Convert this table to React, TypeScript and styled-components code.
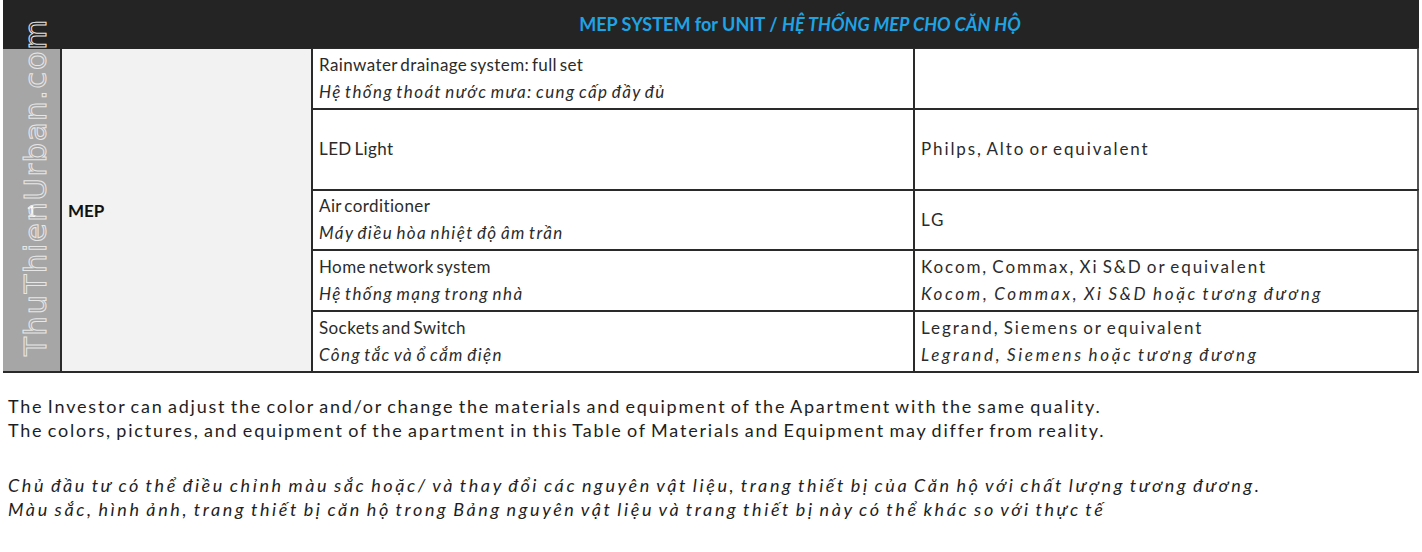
import styled, { createGlobalStyle } from "styled-components";

const GlobalStyle = createGlobalStyle`
    html, body {
        margin: 0;
        padding: 0;
        background: #ffffff;
    }
    body {
        font-family: Lato, "Open Sans", sans-serif;
        color: #262626;
    }
`;

type Item = {
    en: string;
    vi?: string;
    value?: string;
    valueVi?: string;
    height: number;
};

const items: Item[] = [
    {
        en: "Rainwater drainage system: full set",
        vi: "Hệ thống thoát nước mưa: cung cấp đầy đủ",
        height: 61,
    },
    { en: "LED Light", value: "Philps, Alto or equivalent", height: 81 },
    {
        en: "Air corditioner",
        vi: "Máy điều hòa nhiệt độ âm trần",
        value: "LG",
        height: 60,
    },
    {
        en: "Home network system",
        vi: "Hệ thống mạng trong nhà",
        value: "Kocom, Commax, Xi S&D or equivalent",
        valueVi: "Kocom, Commax, Xi S&D hoặc tương đương",
        height: 61,
    },
    {
        en: "Sockets and Switch",
        vi: "Công tắc và ổ cắm điện",
        value: "Legrand, Siemens or equivalent",
        valueVi: "Legrand, Siemens hoặc tương đương",
        height: 61,
    },
];

export default function App() {
    return (
        <Page>
            <GlobalStyle />
            <Table rows={items.map((i) => i.height)}>
                <TitleBar>
                    MEP SYSTEM for UNIT / <em>HỆ THỐNG MEP CHO CĂN HỘ</em>
                </TitleBar>
                <NumberCell>1</NumberCell>
                <GroupCell>MEP</GroupCell>
                {items.map((item, idx) => (
                    <Row key={idx}>
                        <Cell>
                            <Line spacing={0.4}>{item.en}</Line>
                            {item.vi && (
                                <Line italic spacing={1.4}>
                                    {item.vi}
                                </Line>
                            )}
                        </Cell>
                        <Cell right>
                            {item.value && (
                                <Line spacing={1.9}>{item.value}</Line>
                            )}
                            {item.valueVi && (
                                <Line italic spacing={2.7}>
                                    {item.valueVi}
                                </Line>
                            )}
                        </Cell>
                    </Row>
                ))}
                <Watermark>ThuThienUrban.com</Watermark>
            </Table>
            <Notes>
                <Note>
                    The Investor can adjust the color and/or change the
                    materials and equipment of the Apartment with the same
                    quality.
                    <br />
                    The colors, pictures, and equipment of the apartment in
                    this Table of Materials and Equipment may differ from
                    reality.
                </Note>
                <Note italic>
                    Chủ đầu tư có thể điều chỉnh màu sắc hoặc/ và thay đổi các
                    nguyên vật liệu, trang thiết bị của Căn hộ với chất lượng
                    tương đương.
                    <br />
                    Màu sắc, hình ảnh, trang thiết bị căn hộ trong Bảng nguyên
                    vật liệu và trang thiết bị này có thể khác so với thực tế
                </Note>
            </Notes>
        </Page>
    );
}

const Page = styled.div`
    width: 1422px;
    height: 552px;
    padding: 0 0 0 3px;
    box-sizing: border-box;
    overflow: hidden;
`;

const Table = styled.div<{ rows: number[] }>`
    position: relative;
    width: 1416px;
    display: grid;
    grid-template-columns: 59px 249px 1108px;
    grid-template-rows: 49px ${(p) => p.rows.map((r) => `${r}px`).join(" ")};
`;

const TitleBar = styled.div`
    grid-column: 1 / -1;
    background: #242424;
    color: #1ea3e4;
    font-weight: 700;
    font-size: 18px;
    display: flex;
    align-items: center;
    justify-content: center;
    padding-left: 178px;
    padding-bottom: 2px;
    white-space: pre;

    em {
        font-style: italic;
    }
`;

const NumberCell = styled.div`
    grid-column: 1;
    grid-row: 2 / -1;
    background: #a6a6a6;
    border-right: 2px solid #2a2a2a;
    border-bottom: 2px solid #2a2a2a;
    color: #ffffff;
    font-weight: 700;
    font-size: 17px;
    display: flex;
    align-items: center;
    justify-content: center;
`;

const GroupCell = styled.div`
    grid-column: 2;
    grid-row: 2 / -1;
    background: #f2f2f2;
    border-bottom: 2px solid #2a2a2a;
    color: #111;
    font-weight: 700;
    font-size: 17px;
    display: flex;
    align-items: center;
    padding-left: 6px;
`;

const Row = styled.div`
    grid-column: 3;
    display: grid;
    grid-template-columns: 602px 506px;
    border-bottom: 2px solid #2a2a2a;
    margin-top: -1px;
`;

const Cell = styled.div<{ right?: boolean }>`
    display: flex;
    flex-direction: column;
    justify-content: center;
    padding: 0 0 2px 6px;
    border-left: 2px solid #2a2a2a;
    border-right: ${(p) => (p.right ? "2px solid #555" : "none")};
    border-top: 1px solid #2a2a2a;
    background: #ffffff;
`;

const Line = styled.div<{ italic?: boolean; spacing: number }>`
    font-size: 17px;
    line-height: 27px;
    color: #2b2b2b;
    font-style: ${(p) => (p.italic ? "italic" : "normal")};
    letter-spacing: ${(p) => p.spacing}px;
    word-spacing: -2px;
    white-space: nowrap;
`;

const Watermark = styled.div`
    position: absolute;
    left: 14px;
    top: 18px;
    height: 338px;
    writing-mode: vertical-rl;
    transform: rotate(180deg);
    font-family: "DejaVu Sans", sans-serif;
    font-size: 31px;
    letter-spacing: 1.4px;
    color: transparent;
    -webkit-text-stroke: 1px #e6e6e6;
    pointer-events: none;
`;

const Notes = styled.div`
    padding: 21px 0 0 5px;
    display: flex;
    flex-direction: column;
    gap: 31px;
`;

const Note = styled.p<{ italic?: boolean }>`
    margin: 0;
    font-size: 18px;
    line-height: 24px;
    color: #1e1e1e;
    font-style: ${(p) => (p.italic ? "italic" : "normal")};
    letter-spacing: ${(p) => (p.italic ? "2.6px" : "1.8px")};
    word-spacing: -2px;
    white-space: nowrap;
`;
